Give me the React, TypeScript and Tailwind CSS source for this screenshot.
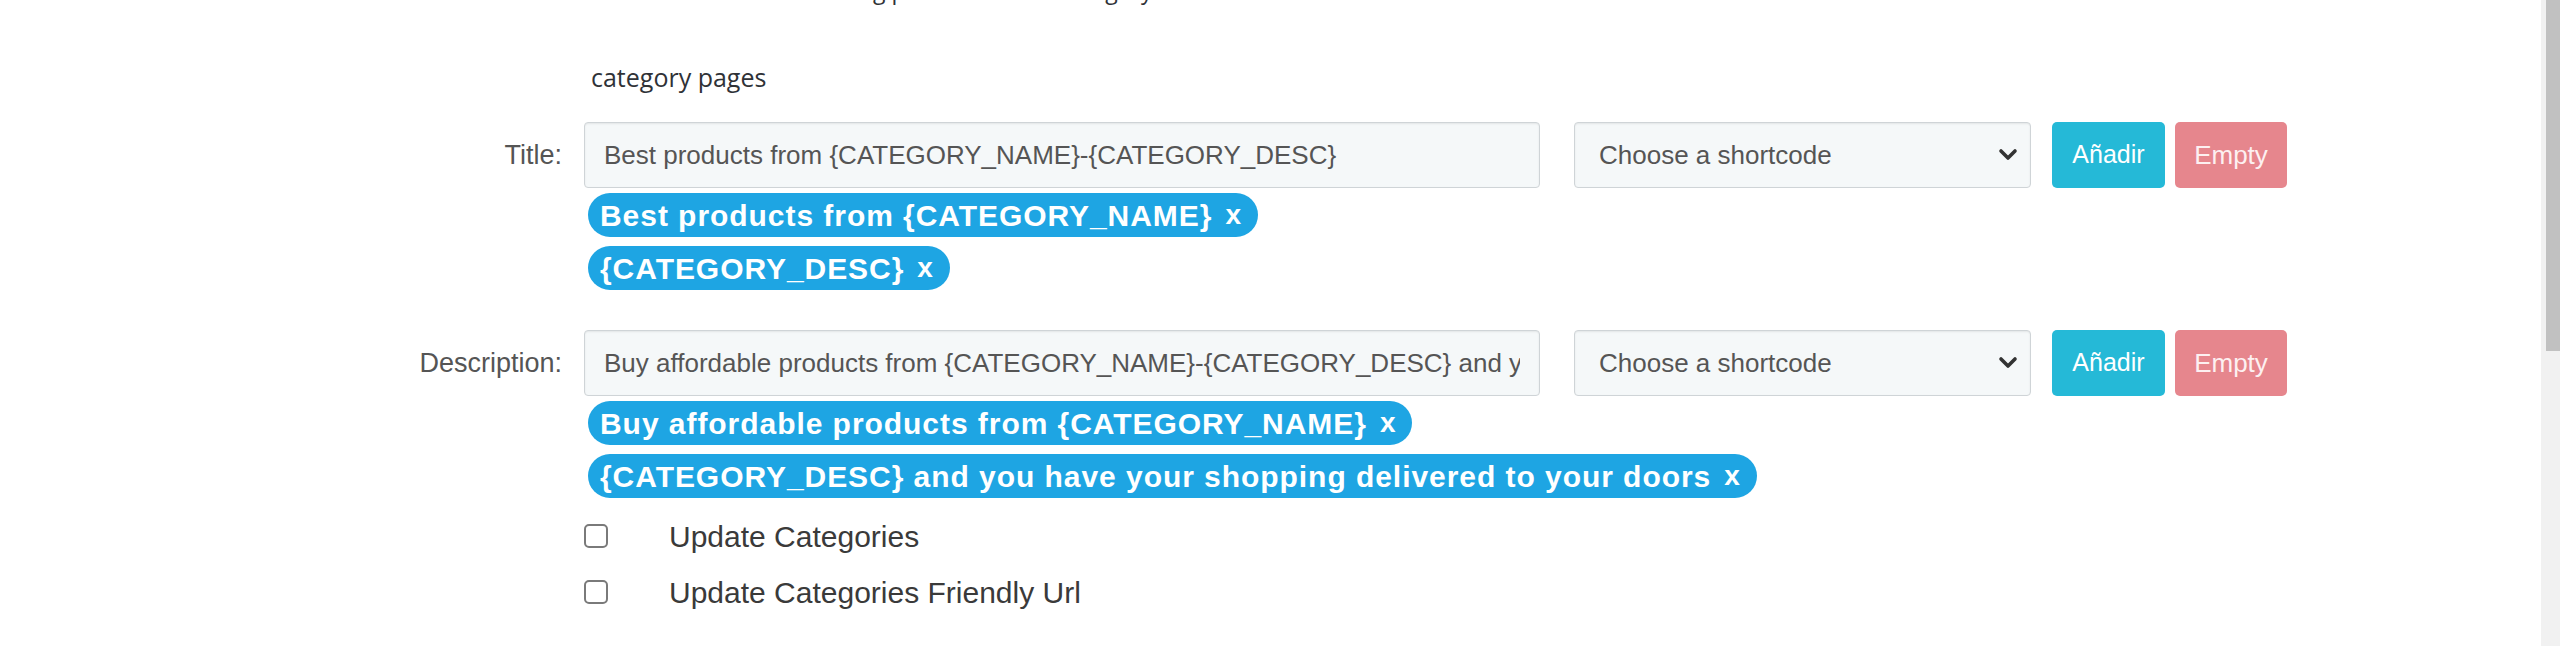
const sans = "font-['Liberation_Sans',Arial,sans-serif]";

type Chip = { text: string };

type FieldProps = {
    label: string;
    value: string;
    chips: Chip[];
};

const Chevron = () => (
    <svg width="20" height="14" viewBox="0 0 20 14" fill="none">
        <polyline
            points="3,3 10,10 17,3"
            stroke="#333"
            strokeWidth="3.6"
            strokeLinecap="round"
            strokeLinejoin="round"
        />
    </svg>
);

const ShortcodeField = ({ label, value, chips }: FieldProps) => (
    <div className="flex items-start">
        <div className="flex h-[66px] w-[562px] shrink-0 items-center justify-end text-[27px] text-[#555]">
            {label}
        </div>
        <div className="ml-[22px] flex flex-col">
            <div className="flex items-center">
                <input
                    readOnly
                    value={value}
                    className="h-[66px] w-[956px] rounded-[4px] border border-[#cfd4d7] bg-[#f5f8f9] px-[19px] text-[26px] text-[#555] shadow-[inset_0_1px_2px_rgba(0,0,0,0.08)] outline-none"
                />
                <div className="ml-[34px] flex h-[66px] w-[457px] items-center justify-between rounded-[4px] border border-[#cfd4d7] bg-[#f5f8f9] pl-[24px] pr-[12px] text-[26px] text-[#555] shadow-[inset_0_1px_2px_rgba(0,0,0,0.08)]">
                    <span>Choose a shortcode</span>
                    <Chevron />
                </div>
                <button className="ml-[21px] h-[66px] w-[113px] rounded-[5px] bg-[#25b9d7] text-[25px] text-white">
                    Añadir
                </button>
                <button className="ml-[10px] h-[66px] w-[112px] rounded-[5px] bg-[#e6868d] text-[26px] text-[#fdf0f1]">
                    Empty
                </button>
            </div>
            <div className="mt-[5px] flex flex-col items-start gap-[9px] pl-[4px]">
                {chips.map((chip) => (
                    <span
                        key={chip.text}
                        className="flex h-[44px] items-center rounded-full bg-[#1ea5e3] pl-[12px] pr-[17px] text-[30px] font-bold tracking-[0.95px] text-white"
                    >
                        {chip.text}
                        <span className="ml-[13px] text-[28px] tracking-normal">x</span>
                    </span>
                ))}
            </div>
        </div>
    </div>
);

const CheckRow = ({ label }: { label: string }) => (
    <label className="flex h-[36px] items-center">
        <input
            type="checkbox"
            className="h-[24px] w-[24px] appearance-none rounded-[5px] border-2 border-[#7a7a7a] bg-white"
        />
        <span className="ml-[61px] text-[30px] text-[#3a3a3a]">{label}</span>
    </label>
);

export default function App() {
    return (
        <div className={`flex h-[646px] w-full overflow-hidden bg-white ${sans}`}>
            <div className="min-w-0 flex-1">
                <div className="pl-[591px] font-['Open_Sans',sans-serif] leading-[30px] text-[#2f3237]">
                    <p className="-mt-[25px] h-[30px] whitespace-nowrap pl-[12px] text-[23px]">
                        Set default meta for listing products in the category
                    </p>
                    <p className="mt-[57px] h-[30px] text-[25px]">category pages</p>
                </div>

                <div className="mt-[30px]">
                    <ShortcodeField
                        label="Title:"
                        value="Best products from {CATEGORY_NAME}-{CATEGORY_DESC}"
                        chips={[
                            { text: "Best products from {CATEGORY_NAME}" },
                            { text: "{CATEGORY_DESC}" },
                        ]}
                    />
                </div>

                <div className="mt-[40px]">
                    <ShortcodeField
                        label="Description:"
                        value="Buy affordable products from {CATEGORY_NAME}-{CATEGORY_DESC} and you have your shopping delivered to your doors"
                        chips={[
                            { text: "Buy affordable products from {CATEGORY_NAME}" },
                            { text: "{CATEGORY_DESC} and you have your shopping delivered to your doors" },
                        ]}
                    />
                </div>

                <div className="ml-[584px] mt-[20px] flex flex-col gap-[20px]">
                    <CheckRow label="Update Categories" />
                    <CheckRow label="Update Categories Friendly Url" />
                </div>
            </div>

            <div className="flex w-[19px] shrink-0 justify-end bg-[#f1f1f1]">
                <div className="h-[351px] w-[14px] bg-[#c1c1c1]" />
            </div>
        </div>
    );
}
